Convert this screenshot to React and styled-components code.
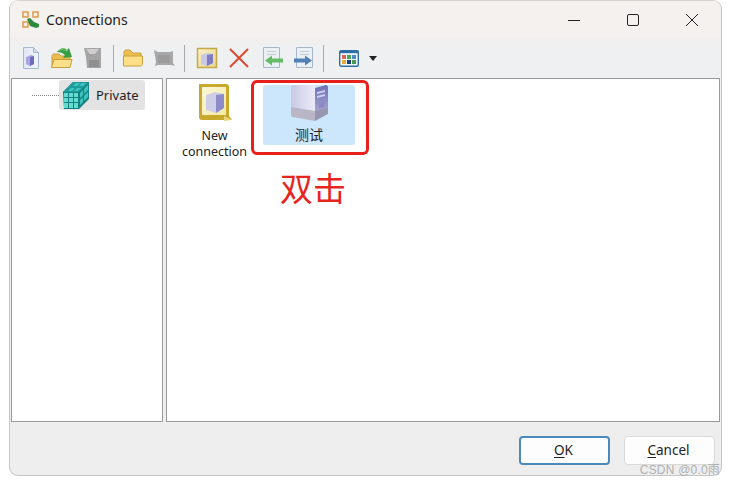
import React from "react";
import styled, { createGlobalStyle } from "styled-components";

const Global = createGlobalStyle`
  html, body { margin: 0; padding: 0; background: #fff; }
  body { font-family: "Noto Sans", "Open Sans", "Noto Sans CJK SC", sans-serif; }
`;
const Page = styled.div`
  position: relative;
  width: 731px;
  height: 485px;
  padding-left: 9px;
  box-sizing: border-box;
  overflow: hidden;
`;
const Win = styled.div`
  width: 713px;
  height: 476px;
  box-sizing: border-box;
  border: 1px solid #c6c4c4;
  border-top-color: #d8d4d0;
  border-radius: 9px;
  background: #eeeeef;
  display: flex;
  flex-direction: column;
  overflow: hidden;
`;
const TitleBar = styled.div`
  height: 37px;
  flex: none;
  display: flex;
  align-items: center;
  background: #f5f1ee;
  padding-left: 12px;
`;
const Title = styled.div`
  margin-left: 6px;
  font-size: 14px;
  color: #222;
  flex: 1;
`;
const WinBtn = styled.div`
  width: 59px;
  height: 37px;
  display: flex;
  align-items: center;
  justify-content: center;
`;
const Toolbar = styled.div`
  height: 40px;
  flex: none;
  display: flex;
  align-items: center;
  padding-left: 5px;
  background: linear-gradient(#f1f0ef, #eff0f1 30%);
`;
const Tool = styled.div`
  width: 31px;
  height: 26px;
  display: flex;
  align-items: center;
  justify-content: center;
  margin-left: ${(p) => p.$ml || 0}px;
`;
const Sep = styled.div`
  width: 1px;
  height: 27px;
  background: #a9a9a9;
  margin: 0 ${(p) => p.$r || 3}px 0 ${(p) => p.$l || 5}px;
`;
const Caret = styled.div`
  width: 0;
  height: 0;
  border-left: 4.5px solid transparent;
  border-right: 4.5px solid transparent;
  border-top: 5px solid #222;
  margin-left: 5px;
`;
const Panes = styled.div`
  flex: none;
  height: 344px;
  display: flex;
  gap: 3px;
  padding: 0 0 0 1px;
`;
const Pane = styled.div`
  box-sizing: border-box;
  background: #fff;
  border: 1px solid #9a9a9a;
  width: ${(p) => p.$w}px;
  height: 100%;
`;
const TreeRow = styled.div`
  display: flex;
  align-items: center;
  margin-top: 1px;
  padding-left: 20px;
`;
const Dots = styled.div`
  width: 27px;
  border-top: 1px dotted #888;
`;
const TreeItem = styled.div`
  display: flex;
  align-items: center;
  height: 30px;
  width: 86px;
  padding-left: 3px;
  box-sizing: border-box;
  background: #e3e3e4;
  border-radius: 3px;
  font-size: 13px;
  color: #222;
  gap: 6px;
`;
const Icons = styled.div`
  display: flex;
  align-items: flex-start;
  padding: 4px 0 0 10px;
`;
const IconItem = styled.div`
  display: flex;
  flex-direction: column;
  align-items: center;
  flex: none;
  width: ${(p) => p.$w}px;
  height: ${(p) => (p.$h ? `${p.$h}px` : "auto")};
  margin: ${(p) => p.$mt || 0}px 0 0 ${(p) => p.$ml || 0}px;
  background: ${(p) => (p.$sel ? "#cce6fb" : "transparent")};
  border-radius: 3px;
  font-size: 12.5px;
  line-height: 16px;
  color: #222;
  text-align: center;
  box-sizing: border-box;
`;
const Label = styled.div`
  margin-top: ${(p) => p.$mt || 0}px;
  font-size: ${(p) => p.$size || 12.5}px;
  white-space: nowrap;
`;
const Footer = styled.div`
  flex: 1;
  display: flex;
  justify-content: flex-end;
  align-items: flex-start;
  gap: 14px;
  padding: 14px 6px 0 0;
`;
const Btn = styled.div`
  width: ${(p) => p.$w}px;
  height: 29px;
  box-sizing: border-box;
  border-radius: 4px;
  background: #fdfdfd;
  border: ${(p) => (p.$def ? "2px solid #4a8abc" : "1px solid #d9d9d9")};
  display: flex;
  align-items: center;
  justify-content: center;
  padding: 0 2px 1px 0;
  font-size: 13.5px;
  color: #222;
  u { text-underline-offset: 2px; }
`;
const Highlight = styled.div`
  position: absolute;
  left: 251px;
  top: 80px;
  width: 118px;
  height: 75px;
  box-sizing: border-box;
  border: 3px solid #e8201c;
  border-radius: 6px;
`;
const Annotation = styled.div`
  position: absolute;
  left: 280px;
  top: 166px;
  font-size: 33px;
  line-height: 42px;
  color: #e5261f;
  font-family: "Noto Sans CJK SC", sans-serif;
`;
const Watermark = styled.div`
  position: absolute;
  right: 11px;
  top: 463px;
  font-size: 12px;
  line-height: 15px;
  color: #b0b0b0;
  font-family: "Liberation Sans", "Noto Sans CJK SC", sans-serif;
  letter-spacing: 0.2px;
`;

const NewDoc = () => (
  <svg width="20" height="24" viewBox="0 0 20 24">
    <defs>
      <linearGradient id="nd" x1="0" y1="0" x2="1" y2="0">
        <stop offset="0" stopColor="#dfe6f5" />
        <stop offset="1" stopColor="#f2f5fb" />
      </linearGradient>
    </defs>
    <path d="M2.500 1.500h10l5 5v16h-15z" fill="url(#nd)" stroke="#a6b7d2" />
    <path d="M12.500 1.500v5h5" fill="#cfd9ea" stroke="#a6b7d2" />
    <path d="M5 11l5-2 3 1v8l-4 2-4-2z" fill="#a9a6e0" />
    <path d="M9 11l4-1v8l-4 2z" fill="#6f6bbd" />
  </svg>
);
const OpenFolder = () => (
  <svg width="24" height="24" viewBox="0 0 24 24">
    <path d="M2 10c0-1 1-2 2-2h5l2 2h9v11H2z" fill="#edbe4e" stroke="#c89f3a" />
    <path d="M1.500 21.500l2.500-8h18l-2 8z" fill="#fbe08a" stroke="#c89f3a" />
    <path d="M7 6c3-4 7-5 10-2l2-2 3 9-9 1 2-3c-2-2-5-3-8-3z" fill="#3a9e42" />
    <path d="M9 5c2-2 5-2 7 0l2-1" fill="none" stroke="#7fd07f" />
  </svg>
);
const GreySave = () => (
  <svg width="22" height="22" viewBox="0 0 22 22">
    <path d="M2 1h17v20H5l-1-11z" fill="#a4a4a4" />
    <path d="M4 2h13l-4 5H8z" fill="#cfcfcf" />
    <path d="M7 13h10v7H7z" fill="#8f8f8f" />
  </svg>
);
const Folder = () => (
  <svg width="22" height="20" viewBox="0 0 22 20">
    <path d="M2 4c0-1 1-2 2-2h4l3 3h8v4H2z" fill="#eebf50" stroke="#c9a03e" />
    <path d="M1.500 18V8h19v8c0 1-1 2-2 2z" fill="#fcdf87" stroke="#c9a03e" />
  </svg>
);
const GreyFolder = () => (
  <svg width="22" height="20" viewBox="0 0 22 20">
    <path d="M1 2l4 2h12l3-1v12l2 3-4-1H5l-3 1 1-4z" fill="#a8a8a8" />
    <path d="M5 7h12v8H5z" fill="#9c9c9c" />
  </svg>
);
const NewConn = () => (
  <svg width="22" height="23" viewBox="0 0 22 23">
    <defs>
      <linearGradient id="nc" x1="0" y1="0" x2="1" y2="1">
        <stop offset="0" stopColor="#fbf3c6" />
        <stop offset="1" stopColor="#e6d58e" />
      </linearGradient>
    </defs>
    <rect x="1.500" y="1.500" width="19" height="19" fill="url(#nc)" stroke="#c3a94a" strokeWidth="1.500" />
    <path d="M5 8l6-2 6 1v9l-6 3-6-2z" fill="#c9c7e8" />
    <path d="M11 8l6-1v9l-6 3z" fill="#7f7cc2" />
  </svg>
);
const RedX = () => (
  <svg width="22" height="22" viewBox="0 0 22 22">
    <path d="M2 2l18 18M20 2L2 20" stroke="#dd4a32" strokeWidth="2" />
  </svg>
);
const DocArrow = ({ right }) => (
  <svg width="22" height="24" viewBox="0 0 22 24">
    <path d="M2.500 1.500h16v20h-16z" fill="#eaf0f4" stroke="#a4b8ca" />
    <path d="M6 5.500h9M6 8.500h9" stroke="#c0ced9" />
    {right ? (
      <path d="M0 12.500h11V9.500l7 5-7 5v-3H0z" fill="#5080b4" />
    ) : (
      <path d="M22 12.500H11V9.500l-7 5 7 5v-3h11z" fill="#66bb66" />
    )}
  </svg>
);
const ViewGrid = () => (
  <svg width="20" height="17" viewBox="0 0 20 17">
    <rect x=".7" y=".7" width="18.600" height="15.600" rx="1.500" fill="#f4f7fa" stroke="#2d6ea6" strokeWidth="1.400" />
    <rect x=".7" y=".7" width="18.600" height="2.500" fill="#2d6ea6" />
    <rect x="3" y="5" width="4" height="4" fill="#d9655f" />
    <rect x="8" y="5" width="4" height="4" fill="#4aa55a" />
    <rect x="13" y="5" width="4" height="4" fill="#4a8ac5" />
    <rect x="3" y="10" width="4" height="4" fill="#e6a93a" />
    <rect x="8" y="10" width="4" height="4" fill="#1e3f73" />
    <rect x="13" y="10" width="4" height="4" fill="#3f9e4d" />
  </svg>
);
const ConnGlyph = () => (
  <svg width="18" height="18" viewBox="0 0 18 18">
    <rect x="1" y="1" width="5" height="5" fill="#fbeedd" stroke="#dd9a50" strokeWidth="1.500" />
    <rect x="11" y="1" width="5" height="5" fill="#fbeedd" stroke="#dd9a50" strokeWidth="1.500" />
    <rect x="1" y="11" width="5" height="5" fill="#fbeedd" stroke="#dd9a50" strokeWidth="1.500" />
    <path d="M5 8l3-1 4 4 5 2v3l-3 1-6-2z" fill="#2f8a3e" />
  </svg>
);
const Cube = () => (
  <svg width="28" height="30" viewBox="0 0 28 30">
    <path d="M1 12L11 2h16v17L17 29H2z" fill="#178083" />
    <path d="M1 12L11 2h16L17 12z" fill="#1c9c9c" />
    <g fill="#62dccf">
      <rect x="2" y="13" width="4" height="4" />
      <rect x="7" y="13" width="4" height="4" />
      <rect x="12" y="13" width="4" height="4" />
      <rect x="2" y="18" width="4" height="4" />
      <rect x="7" y="18" width="4" height="4" />
      <rect x="12" y="18" width="4" height="4" />
      <rect x="2" y="23" width="4" height="5" />
      <rect x="7" y="23" width="4" height="5" />
      <rect x="12" y="23" width="4" height="5" />
    </g>
    <g fill="#3fc4bc">
      <path d="M6 11l3-3h4l-3 3zM12 11l3-3h4l-3 3zM11 6l3-3h4l-3 3zM17 6l3-3h4l-3 3z" />
      <path d="M18 13l3-3v5l-3 3zM22 9l4-4v5l-4 4zM18 20l3-3v5l-3 3zM22 16l4-4v5l-4 4z" />
    </g>
  </svg>
);
const BigServer = () => (
  <svg width="38" height="37" viewBox="0 0 38 37">
    <defs>
      <linearGradient id="bsf" x1="0" y1="0" x2="1" y2="0">
        <stop offset="0" stopColor="#c9c8e6" />
        <stop offset="1" stopColor="#ecebf8" />
      </linearGradient>
      <linearGradient id="bss" x1="0" y1="0" x2="0" y2="1">
        <stop offset="0" stopColor="#6f70b4" />
        <stop offset="1" stopColor="#a6a6d4" />
      </linearGradient>
    </defs>
    <path d="M1 2c0-1 1-2 2-2h22v26L3 23c-1 0-2-1-2-2z" fill="url(#bsf)" />
    <path d="M25 3l11-3c1 0 2 1 2 2v22l-13 4z" fill="url(#bss)" />
    <path d="M27 7l8-2v2l-8 2zM27 11l8-2v2l-8 2z" fill="#cfd0ef" />
    <path d="M29 18l5-1v5l-5 1z" fill="#8a8ac4" />
    <path d="M1 22l24 4v10L3 32c-1 0-2-1-2-2z" fill="#b9b7c6" />
    <path d="M25 26l13-3v6l-13 7z" fill="#9896b0" />
  </svg>
);
const BigNew = () => (
  <svg width="38" height="40" viewBox="0 0 38 40">
    <defs>
      <linearGradient id="bn" x1="0" y1="0" x2="1" y2="1">
        <stop offset="0" stopColor="#fdf8d6" />
        <stop offset="1" stopColor="#f5e9a6" />
      </linearGradient>
    </defs>
    <path d="M3 1h28l2 2v30l3 4H6c-2 0-3-1-3-3z" fill="#c9a92b" />
    <path d="M6 4h24v28H6z" fill="url(#bn)" />
    <path d="M28 33l8 4-8 1z" fill="#e8d67a" />
    <path d="M10 12l9-3 9 2v14l-8 5-10-3z" fill="#cfcee9" />
    <path d="M20 12l8-1v14l-8 5z" fill="#8d8bc9" />
  </svg>
);

export default function App() {
  return (
    <Page>
      <Global />
      <Win>
        <TitleBar>
          <ConnGlyph />
          <Title>Connections</Title>
          <WinBtn>
            <svg width="12" height="12" viewBox="0 0 12 12"><path d="M0 6.500h12" stroke="#222" /></svg>
          </WinBtn>
          <WinBtn>
            <svg width="12" height="12" viewBox="0 0 12 12"><rect x=".5" y=".5" width="11" height="11" rx="1.500" fill="none" stroke="#222" /></svg>
          </WinBtn>
          <WinBtn>
            <svg width="12" height="12" viewBox="0 0 12 12"><path d="M0 0l12 12M12 0L0 12" stroke="#222" /></svg>
          </WinBtn>
        </TitleBar>
        <Toolbar>
          <Tool><NewDoc /></Tool>
          <Tool><OpenFolder /></Tool>
          <Tool><GreySave /></Tool>
          <Sep />
          <Tool><Folder /></Tool>
          <Tool><GreyFolder /></Tool>
          <Sep $r={6} />
          <Tool><NewConn /></Tool>
          <Tool $ml={1}><RedX /></Tool>
          <Tool $ml={2}><DocArrow /></Tool>
          <Tool $ml={2}><DocArrow right /></Tool>
          <Sep $l={3} $r={9} />
          <Tool><ViewGrid /></Tool>
          <Caret />
        </Toolbar>
        <Panes>
          <Pane $w={152}>
            <TreeRow>
              <Dots />
              <TreeItem>
                <Cube />
                Private
              </TreeItem>
            </TreeRow>
          </Pane>
          <Pane $w={554}>
            <Icons>
              <IconItem $w={75}>
                <BigNew />
                <Label $mt={5}>New<br />connection</Label>
              </IconItem>
              <IconItem $w={92} $h={60} $mt={2} $ml={11} $sel>
                <BigServer />
                <Label $mt={5} $size={14}>测试</Label>
              </IconItem>
            </Icons>
          </Pane>
        </Panes>
        <Footer>
          <Btn $w={91} $def><span><u>O</u>K</span></Btn>
          <Btn $w={91}><span><u>C</u>ancel</span></Btn>
        </Footer>
      </Win>
      <Highlight />
      <Annotation>双击</Annotation>
      <Watermark>CSDN @0.0雨</Watermark>
    </Page>
  );
}
